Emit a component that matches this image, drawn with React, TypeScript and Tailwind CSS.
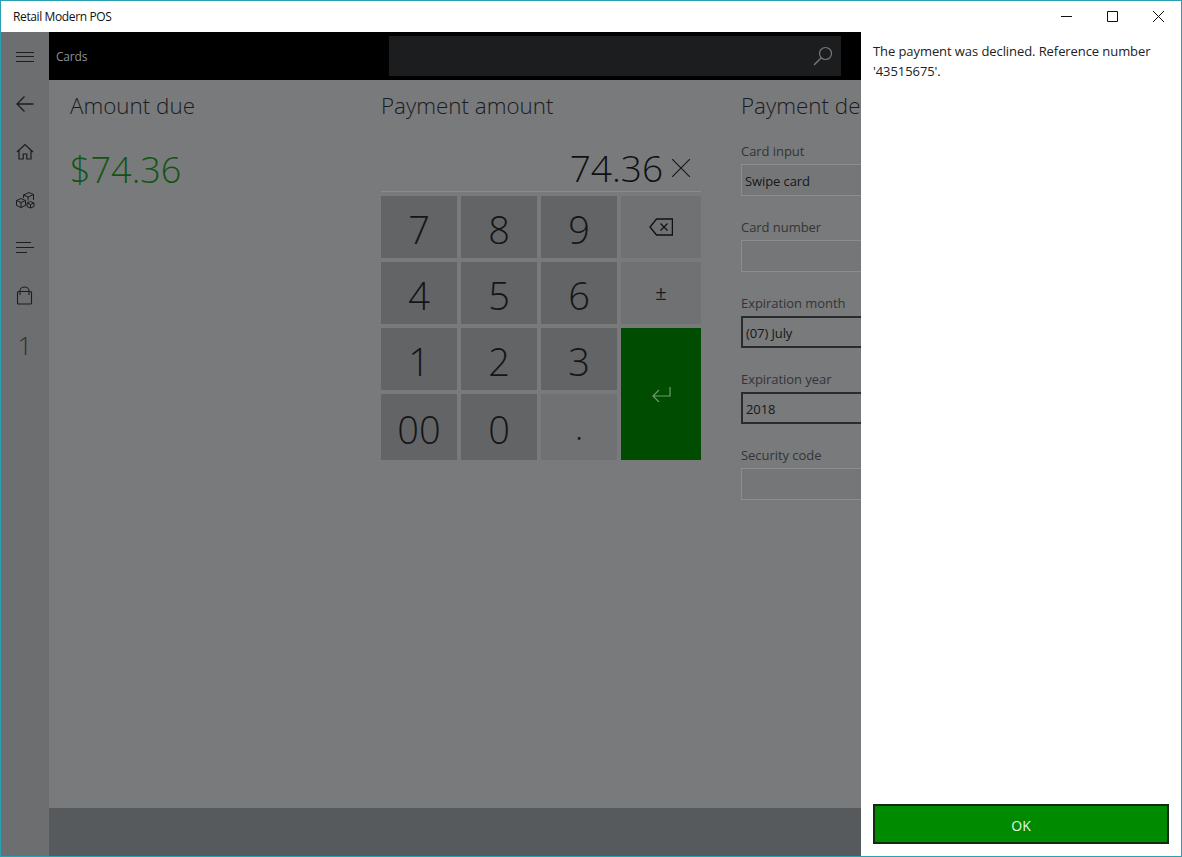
const font = { fontFamily: '"Open Sans", "Noto Sans", sans-serif' };

const digits = ['7', '8', '9'];

const Key = ({ label, className = '' }: { label: string; className?: string }) => (
  <div className={`flex items-center justify-center bg-[#636466] pt-[4px] font-light text-[38px] text-[#141516] leading-none ${className}`}>
    {label}
  </div>
);

const Field = ({ label, value, dark }: { label: string; value?: string; dark?: boolean }) => (
  <div className="h-[76px]">
    <div className="h-[24px] pt-[2px] text-[13px] leading-[18px] text-[#333435] tracking-[-0.05px] whitespace-nowrap">{label}</div>
    <div
      className={`h-[32px] w-[300px] flex items-center pt-[4px] text-[13px] tracking-[-0.1px] text-[#161718] ${
        dark ? 'border-2 border-[#2a2b2c] pl-[3px]' : 'border border-[#8c8d8f] bg-[#757678] pl-[3px]'
      }`}
    >
      {value}
    </div>
  </div>
);

const RailIcon = ({ children, className = '' }: { children: React.ReactNode; className?: string }) => (
  <div className={`h-[48px] flex items-center justify-center ${className}`}>
    <svg width="20" height="20" viewBox="0 0 20 20" fill="none" stroke="#1c1d1e" strokeWidth="1">
      {children}
    </svg>
  </div>
);

export default function App() {
  return (
    <div className="h-[857px] w-[1182px] flex flex-col border border-[#2aa0b4] overflow-hidden bg-white" style={font}>
      {/* title bar */}
      <div className="h-[31px] shrink-0 flex items-center justify-between bg-white pl-[12px]">
        <span className="text-[12px] text-[#111] tracking-[-0.38px]">Retail Modern POS</span>
        <div className="flex items-center">
          <div className="w-[46px] h-[31px] flex items-center justify-center">
            <svg width="11" height="11" viewBox="0 0 11 11" stroke="#111" fill="none"><path d="M0 5.5h11" /></svg>
          </div>
          <div className="w-[46px] h-[31px] flex items-center justify-center">
            <svg width="11" height="11" viewBox="0 0 11 11" stroke="#111" fill="none"><path d="M.5.5h10v10H.5z" /></svg>
          </div>
          <div className="w-[46px] h-[31px] flex items-center justify-center">
            <svg width="11" height="11" viewBox="0 0 11 11" stroke="#111" fill="none"><path d="M0 0l11 11M11 0L0 11" /></svg>
          </div>
        </div>
      </div>

      <div className="flex-1 flex min-h-0">
        {/* left rail */}
        <div className="w-[48px] shrink-0 bg-[#6d6e70] flex flex-col">
          <RailIcon>
            <path d="M1 6.500h18M1 10.500h18M1 15.500h18" />
          </RailIcon>
          <RailIcon>
            <path d="M18.5 10H2M9.5 2.5L2 10l7.500 7.500" strokeWidth="1.3" />
          </RailIcon>
          <RailIcon>
            <path d="M2 10l8-7.500 8 7.500M4 8.500V17h4.200v-5h3.600v5H16V8.500" strokeWidth="1.2" />
          </RailIcon>
          <RailIcon>
            <path d="M1.500 10.500L6 8.500l4.500 2v5L6 17.500l-4.500-2zM1.500 10.500L6 12.500l4.500-2M6 12.500v5M12 13l3.500-1.500L19 13v3.500L15.500 18 12 16.500zM12 13l3.500 1.500L19 13M15.500 14.500V18M8.500 5L14 2.500l4.500 2V10M8.500 5L13 7l5.500-2.500M13 7v3.500M8.500 5v3" />
          </RailIcon>
          <RailIcon>
            <path d="M1 4.500h15M1 9.500h18M1 14.500h11" />
          </RailIcon>
          <RailIcon>
            <path d="M3.500 5.500h12a1 1 0 011 1v10.500a1 1 0 01-1 1h-12a1 1 0 01-1-1V6.500a1 1 0 011-1zM5 9V5a4.500 4 0 019 0v4" strokeWidth="1.1" />
          </RailIcon>
          <div className="h-[48px] flex items-center justify-center pt-[2px] font-light text-[26px] text-[#2f3031]">1</div>
        </div>

        {/* center */}
        <div className="w-[812px] shrink-0 flex flex-col overflow-hidden bg-[#797a7c]">
          <div className="h-[48px] shrink-0 bg-black flex items-center pl-[7px] pr-[20px] justify-between">
            <span className="pt-[2px] text-[12px] tracking-[-0.2px] text-[#8f9092]">Cards</span>
            <div className="w-[452px] h-[40px] bg-[#1c1d1f] flex items-center justify-end pr-[8px]">
              <svg width="20" height="20" viewBox="0 0 20 20" fill="none" stroke="#77787a" strokeWidth="1.2">
                <circle cx="12.500" cy="7.500" r="6" />
                <path d="M8 12l-7 7" strokeWidth="1.5" />
              </svg>
            </div>
          </div>

          <div className="flex-1 flex min-h-0 pl-[21px] pt-[11px]">
            <div className="w-[311px] shrink-0">
              <div className="font-light text-[22.4px] leading-[30px] text-[#1b1c1d]">Amount due</div>
              <div className="mt-[24px] font-light text-[36px] leading-[50px] text-[#125512]">$74.36</div>
            </div>

            <div className="w-[320px] shrink-0">
              <div className="font-light text-[22.4px] leading-[30px] text-[#1b1c1d]">Payment amount</div>
              <div className="mt-[30px] h-[41px] flex items-center justify-end border-b border-[#8a8b8d] pb-[7px] pr-[11px] gap-[9px]">
                <span className="font-light text-[37px] leading-none text-[#0f1011]">74.36</span>
                <svg width="18" height="18" viewBox="0 0 18 18" fill="none" stroke="#1b1c1d" strokeWidth="1.2">
                  <path d="M0 0l18 18M18 0L0 18" />
                </svg>
              </div>
              <div className="mt-[4px] grid grid-cols-[76px_76px_76px_80px] grid-rows-[62px_62px_62px_66px] gap-[4px]">
                {digits.map((d) => (
                  <Key key={d} label={d} />
                ))}
                <div className="flex items-center justify-center bg-[#707173]">
                  <svg width="24" height="18" viewBox="0 0 24 18" fill="none" stroke="#111" strokeWidth="1.3">
                    <path d="M23.400 1H7.500L1 9l6.500 8h15.900zM11.500 5.500l7 7M18.500 5.500l-7 7" />
                  </svg>
                </div>
                <Key label="4" />
                <Key label="5" />
                <Key label="6" />
                <div className="flex items-center justify-center bg-[#707173] text-[20px] text-[#1b1c1d]">±</div>
                <Key label="1" />
                <Key label="2" />
                <Key label="3" />
                <div className="row-span-2 bg-[#004c00] flex items-center justify-center">
                  <svg width="20" height="16" viewBox="0 0 20 16" fill="none" stroke="#6f9a6f" strokeWidth="1.2">
                    <path d="M19 1v9H2M8 4l-6 6 6 6" />
                  </svg>
                </div>
                <Key label="00" />
                <Key label="0" />
                <div className="flex items-center justify-center bg-[#707173] font-light text-[36px] leading-none text-[#1b1c1d]">.</div>
              </div>
            </div>

            <div className="w-[40px] shrink-0" />
            <div className="shrink-0 w-[300px]">
              <div className="font-light text-[22.4px] leading-[30px] text-[#1b1c1d] whitespace-nowrap">Payment details</div>
              <div className="mt-[19px]">
                <Field label="Card input" value="Swipe card" />
                <Field label="Card number" />
                <Field label="Expiration month" value="(07) July" dark />
                <Field label="Expiration year" value="2018" dark />
                <Field label="Security code" />
              </div>
            </div>
          </div>

          <div className="h-[48px] shrink-0 bg-[#575a5d]" />
        </div>

        {/* message panel */}
        <div className="w-[320px] shrink-0 bg-white flex flex-col justify-between pl-[12px] pr-[12px] pt-[9px] pb-[12px]">
          <p className="text-[13px] leading-[20px] text-[#222] tracking-[-0.08px]">
            The payment was declined. Reference number '43515675'.
          </p>
          <button className="h-[40px] w-full bg-[#008a00] border-2 border-[#132a13] pt-[2px] text-[14px] text-[#e6f5e6]">OK</button>
        </div>
      </div>
    </div>
  );
}
